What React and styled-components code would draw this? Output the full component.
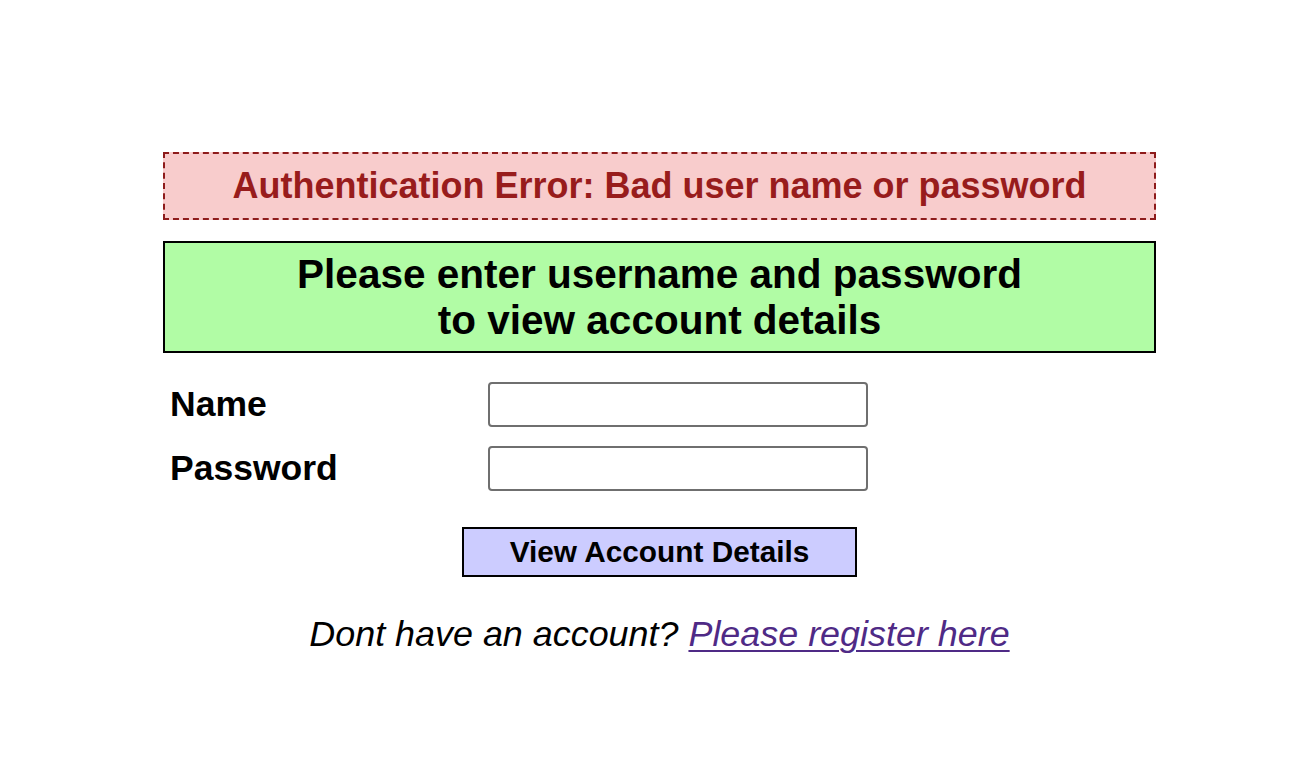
import styled, { createGlobalStyle } from "styled-components";

const GlobalStyle = createGlobalStyle`
  html, body {
    margin: 0;
    padding: 0;
    background: #ffffff;
  }
  body {
    font-family: "Liberation Sans", Arial, sans-serif;
    color: #000;
  }
`;

const Page = styled.div`
  padding: 152px 0 0 163px;
`;

const Container = styled.div`
  width: 993px;
  display: flex;
  flex-direction: column;
`;

const ErrorBox = styled.div`
  box-sizing: border-box;
  height: 68px;
  display: flex;
  align-items: center;
  justify-content: center;
  background-color: #f8cccc;
  border: 2px dashed #8e1b1b;
  color: #981c1c;
  font-size: 36px;
  font-weight: bold;
`;

const Banner = styled.div`
  box-sizing: border-box;
  margin-top: 21px;
  height: 112px;
  display: flex;
  flex-direction: column;
  align-items: center;
  justify-content: center;
  background-color: #b1fca5;
  border: 2px solid #000;
  font-size: 40.5px;
  font-weight: bold;
  line-height: 46px;
  text-align: center;
`;

const Form = styled.form`
  margin: 29px 0 0;
  display: grid;
  grid-template-columns: 318px 380px;
  row-gap: 19px;
  padding-left: 7px;
  align-items: center;
`;

const Label = styled.label`
  font-size: 35.5px;
  font-weight: bold;
  line-height: 41px;
`;

const Input = styled.input`
  box-sizing: border-box;
  width: 380px;
  height: 45px;
  border: 2px solid #6f6f6f;
  border-radius: 4px;
  background: #fff;
  font-size: 20px;
  padding: 0 8px;
  outline: none;
`;

const ButtonRow = styled.div`
  grid-column: 1 / -1;
  margin-left: -7px;
  width: 993px;
  margin-top: 17px;
  display: flex;
  justify-content: center;
`;

const SubmitButton = styled.button`
  box-sizing: border-box;
  width: 395px;
  height: 50px;
  background-color: #ccccff;
  border: 2px solid #000;
  font-family: "Liberation Sans", Arial, sans-serif;
  font-size: 29.8px;
  font-weight: bold;
  color: #000;
  cursor: pointer;
  padding: 0;
`;

const Footer = styled.p`
  margin: 37px 0 0;
  text-align: center;
  font-size: 35.9px;
  font-style: italic;
  line-height: 41px;
`;

const RegisterLink = styled.a`
  color: #4f2a86;
  text-decoration: underline;
  text-decoration-thickness: 2px;
  text-underline-offset: 4px;
`;

export default function App() {
  return (
    <>
      <GlobalStyle />
      <Page>
        <Container>
          <ErrorBox>Authentication Error: Bad user name or password</ErrorBox>
          <Banner>
            <div>Please enter username and password</div>
            <div>to view account details</div>
          </Banner>
          <Form onSubmit={(e) => e.preventDefault()}>
            <Label htmlFor="name">Name</Label>
            <Input id="name" type="text" />
            <Label htmlFor="password">Password</Label>
            <Input id="password" type="password" />
            <ButtonRow>
              <SubmitButton type="submit">View Account Details</SubmitButton>
            </ButtonRow>
          </Form>
          <Footer>
            Dont have an account? <RegisterLink href="#register">Please register here</RegisterLink>
          </Footer>
        </Container>
      </Page>
    </>
  );
}
